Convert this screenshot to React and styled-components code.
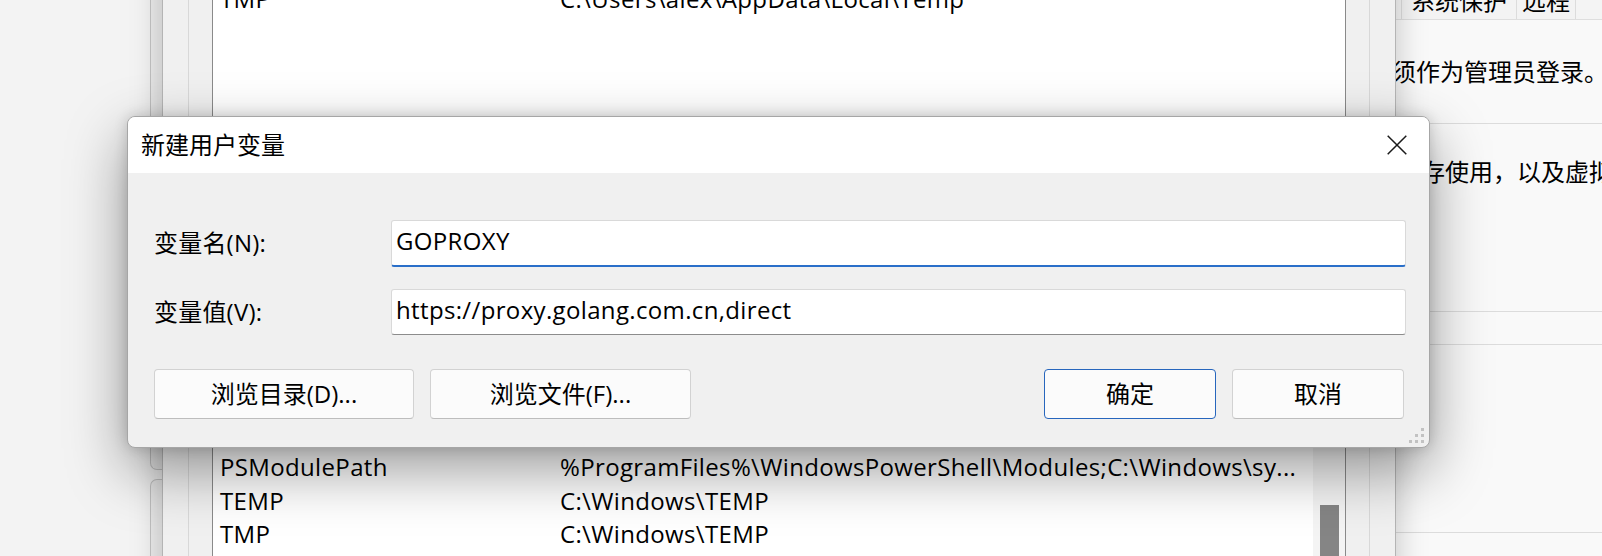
import styled, { createGlobalStyle } from 'styled-components';

const FONT = `"Open Sans", "Noto Sans CJK SC", sans-serif`;

const GlobalStyle = createGlobalStyle`
	html, body {
		margin: 0;
		padding: 0;
		background: #f3f3f3;
		overflow: hidden;
	}
	* {
		box-sizing: border-box;
	}
`;

const userVars = [
	['OneDrive', 'C:\\Users\\alex\\OneDrive'],
	['Path', 'C:\\Users\\alex\\AppData\\Local\\Microsoft\\WindowsApps;'],
	['TEMP', 'C:\\Users\\alex\\AppData\\Local\\Temp'],
	['TMP', 'C:\\Users\\alex\\AppData\\Local\\Temp'],
];

const systemVars = [
	['OS', 'Windows_NT'],
	['Path', 'C:\\Windows\\system32;C:\\Windows;'],
	['PATHEXT', '.COM;.EXE;.BAT;.CMD;.VBS;.VBE;.JS;.JSE;.WSF;.WSH;.MSC'],
	['PROCESSOR_REVISION', '9a03'],
	['PSModulePath', '%ProgramFiles%\\WindowsPowerShell\\Modules;C:\\Windows\\sy...'],
	['TEMP', 'C:\\Windows\\TEMP'],
	['TMP', 'C:\\Windows\\TEMP'],
	['USERNAME', 'SYSTEM'],
];

function VarList({ rows, scroll }) {
	return (
		<ListBox>
			<Rows>
				{rows.map(([name, value]) => (
					<Row key={name}>
						<span>{name}</span>
						<span>{value}</span>
					</Row>
				))}
			</Rows>
			{scroll && (
				<ScrollTrack>
					<Thumb $offset={scroll} />
				</ScrollTrack>
			)}
		</ListBox>
	);
}

function App() {
	return (
		<>
			<GlobalStyle />
			<Desktop>
				{/* window far behind, on the left */}
				<BackWindow>
					<BackPanel $height={490} />
					<BackPanel $grow />
				</BackWindow>

				{/* system properties window, on the right */}
				<SysWindow>
					<TabRow>
						<Tab $width={116}>系统保护</Tab>
						<Tab $width={60}>远程</Tab>
					</TabRow>
					<TabPage>
						<Notice>要进行大多数更改，你必须作为管理员登录。</Notice>
						<SysGroup $top={34}>
							<Notice>视觉效果，处理器计划，内存使用，以及虚拟内存</Notice>
						</SysGroup>
						<SysGroup $top={32}>
							<Notice>登录相关的桌面设置</Notice>
						</SysGroup>
					</TabPage>
				</SysWindow>

				{/* environment variables window */}
				<EnvWindow>
					<GroupFrame $height={410}>
						<VarList rows={userVars} />
					</GroupFrame>
					<GroupFrame $grow>
						<VarList rows={systemVars} scroll={189} />
					</GroupFrame>
				</EnvWindow>

				{/* new user variable dialog */}
				<Dialog>
					<TitleBar>
						<Title>新建用户变量</Title>
						<svg width='20' height='20' viewBox='0 0 20 20'>
							<path
								d='M0.7 0.7 L19.3 19.3 M19.3 0.7 L0.7 19.3'
								stroke='#1b1b1b'
								strokeWidth='1.5'
								fill='none'
							/>
						</svg>
					</TitleBar>
					<DialogBody>
						<Field>
							<Label>变量名(N):</Label>
							<TextInput $focused readOnly value='GOPROXY' />
						</Field>
						<Field $top={22}>
							<Label>变量值(V):</Label>
							<TextInput readOnly value='https://proxy.golang.com.cn,direct' />
						</Field>
						<ButtonRow>
							<Button $width={260}>浏览目录(D)...</Button>
							<Button $width={261}>浏览文件(F)...</Button>
							<Spacer />
							<Button $width={172} $primary>
								确定
							</Button>
							<Button $width={172}>取消</Button>
						</ButtonRow>
					</DialogBody>
					<Grip width='16' height='16' viewBox='0 0 16 16'>
						<rect x='13' y='1' width='3' height='3' />
						<rect x='7' y='7' width='3' height='3' />
						<rect x='13' y='7' width='3' height='3' />
						<rect x='1' y='13' width='3' height='3' />
						<rect x='7' y='13' width='3' height='3' />
						<rect x='13' y='13' width='3' height='3' />
					</Grip>
				</Dialog>
			</Desktop>
		</>
	);
}

export default App;

// ########## styled components ##########
const Desktop = styled.div`
	position: relative;
	width: 1602px;
	height: 556px;
	overflow: hidden;
	background: #f3f3f3;
	font-family: ${FONT};
	font-size: 24px;
	color: #000;
`;

const BackWindow = styled.div`
	position: absolute;
	left: 0;
	top: -20px;
	width: 400px;
	height: 600px;
	padding-left: 150px;
	display: flex;
	flex-direction: column;
	gap: 9px;
`;

const BackPanel = styled.div`
	height: ${(p) => (p.$height ? `${p.$height}px` : 'auto')};
	flex: ${(p) => (p.$grow ? 1 : 'none')};
	border: 1px solid #c6c6c6;
	border-right: none;
	border-radius: 7px 0 0 7px;
	background: #ececec;
`;

const SysWindow = styled.div`
	position: absolute;
	left: 1100px;
	top: -18px;
	width: 520px;
	height: 600px;
	background: #f9f9f9;
	z-index: 1;
	display: flex;
	flex-direction: column;
`;

const TabRow = styled.div`
	display: flex;
	height: 37px;
	padding-left: 302px;
	background: #f4f4f4;
`;

const Tab = styled.div`
	width: ${(p) => p.$width}px;
	height: 37px;
	display: flex;
	align-items: center;
	justify-content: center;
	border: 1px solid #dcdcdc;
	border-bottom: none;
	margin-left: -1px;
	background: #f3f3f3;
	line-height: 1;
`;

const TabPage = styled.div`
	flex: 1;
	border-top: 1px solid #dedede;
	padding: 35px 0 0 28px;
`;

const Notice = styled.div`
	height: 34px;
	line-height: 34px;
	white-space: nowrap;
`;

const SysGroup = styled.div`
	margin-top: ${(p) => p.$top}px;
	height: 189px;
	border: 1px solid #dcdcdc;
	border-right: none;
	padding: 31px 0 0 4px;
`;

const EnvWindow = styled.div`
	position: absolute;
	left: 162px;
	top: -120px;
	width: 1234px;
	height: 720px;
	background: #f0f0f0;
	border-left: 1px solid #b4b4b4;
	border-right: 1px solid #b4b4b4;
	box-shadow: 0 0 30px rgba(0, 0, 0, 0.22);
	z-index: 2;
	display: flex;
	flex-direction: column;
	padding: 0 25px;
`;

const GroupFrame = styled.div`
	height: ${(p) => (p.$height ? `${p.$height}px` : 'auto')};
	flex: ${(p) => (p.$grow ? 1 : 'none')};
	margin-top: ${(p) => (p.$grow ? '10px' : 0)};
	padding: ${(p) => (p.$grow ? '15px' : 0)} 23px 0;
	border-left: 1px solid #d8d8d8;
	border-right: 1px solid #d8d8d8;
	display: flex;
	flex-direction: column;
`;

const ListBox = styled.div`
	flex: 1;
	display: flex;
	background: #fff;
	border: 1px solid #8a8a8a;
	overflow: hidden;
`;

const Rows = styled.div`
	flex: 1;
	min-width: 0;
`;

const Row = styled.div`
	display: grid;
	grid-template-columns: 340px 1fr;
	height: 33.5px;
	line-height: 33.5px;
	padding-left: 7px;
	letter-spacing: 0.35px;
	white-space: nowrap;
	overflow: hidden;
`;

const ScrollTrack = styled.div`
	width: 32px;
	background: #f4f4f4;
`;

const Thumb = styled.div`
	width: 19px;
	height: 220px;
	margin: ${(p) => p.$offset}px auto 0;
	background: #858585;
`;

const Dialog = styled.div`
	position: absolute;
	left: 127px;
	top: 116px;
	width: 1303px;
	height: 332px;
	z-index: 3;
	display: flex;
	flex-direction: column;
	background: #f0f0f0;
	border: 1px solid #a6a6a6;
	border-radius: 8px;
	overflow: hidden;
	box-shadow: 0 22px 60px rgba(0, 0, 0, 0.4), 0 0 14px rgba(0, 0, 0, 0.16);
`;

const TitleBar = styled.div`
	height: 56px;
	flex: none;
	display: flex;
	align-items: center;
	justify-content: space-between;
	padding: 0 22px 0 13px;
	background: #fff;
`;

const Title = styled.span`
	font-size: 24px;
	line-height: 1;
`;

const DialogBody = styled.div`
	flex: 1;
	display: flex;
	flex-direction: column;
	padding: 47px 23px 0 26px;
`;

const Field = styled.div`
	display: grid;
	grid-template-columns: 237px 1fr;
	align-items: center;
	margin-top: ${(p) => p.$top || 0}px;
`;

const Label = styled.span`
	line-height: 1.2;
	letter-spacing: 0.2px;
	white-space: nowrap;
`;

const TextInput = styled.input`
	height: ${(p) => (p.$focused ? 47 : 46)}px;
	width: 100%;
	margin: 0;
	padding: 0 4px 6px;
	font-family: ${FONT};
	font-size: 24px;
	letter-spacing: 0.35px;
	color: #000;
	background: #fff;
	outline: none;
	border: 1px solid #d9d9d9;
	border-radius: 3px;
	border-bottom: ${(p) => (p.$focused ? '2px solid #2a6fc9' : '1px solid #8c8c8c')};
`;

const ButtonRow = styled.div`
	display: flex;
	gap: 16px;
	margin-top: 34px;
	padding-right: 2px;
`;

const Spacer = styled.div`
	flex: 1;
`;

const Button = styled.button`
	width: ${(p) => p.$width}px;
	height: 50px;
	padding: 0;
	font-family: ${FONT};
	font-size: 24px;
	color: #000;
	background: #fbfbfb;
	border: 1px solid ${(p) => (p.$primary ? '#2766bd' : '#d2d2d2')};
	border-bottom-color: ${(p) => (p.$primary ? '#2766bd' : '#bdbdbd')};
	border-radius: 4px;
	line-height: 1;
`;

const Grip = styled.svg`
	position: absolute;
	right: 5px;
	bottom: 4px;
	fill: #c2c2c2;
`;
